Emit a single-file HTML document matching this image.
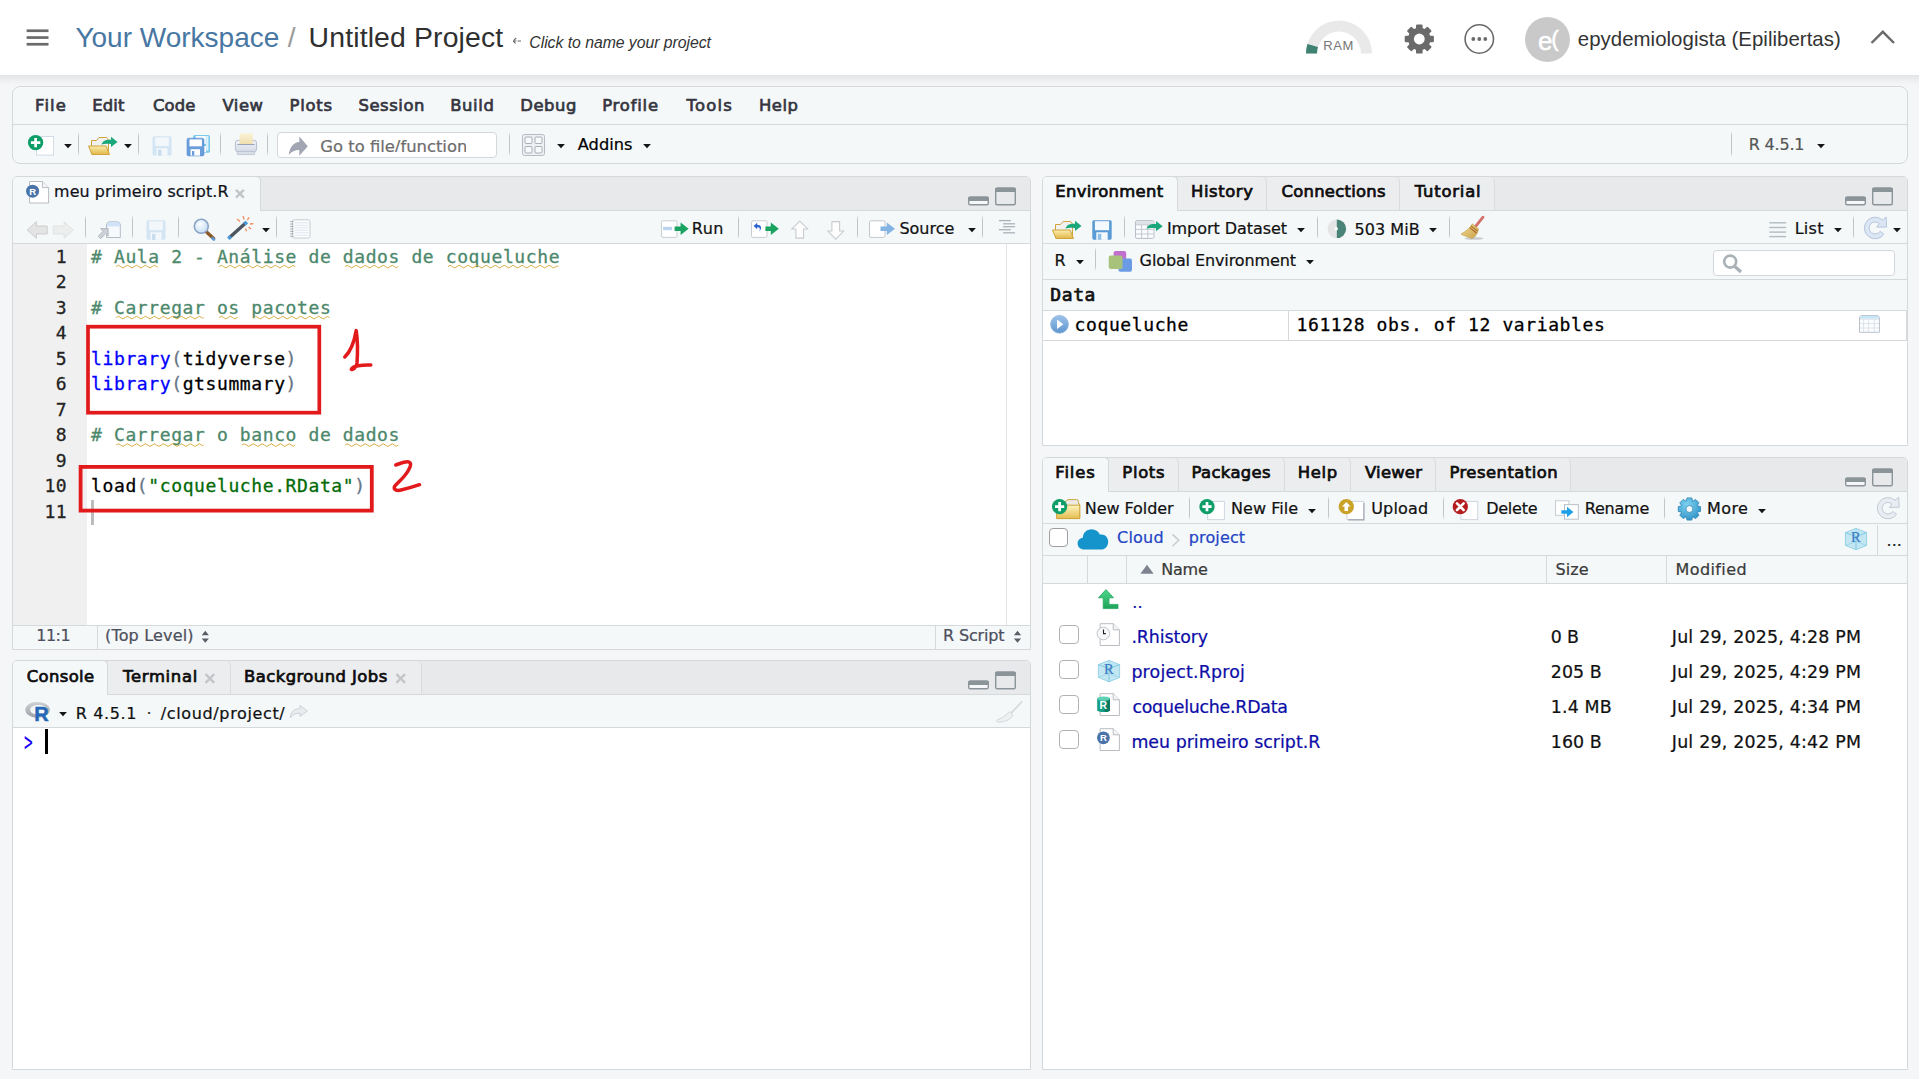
<!DOCTYPE html>
<html lang="pt">
<head>
<meta charset="utf-8">
<title>Untitled Project - Posit Cloud</title>
<style>
*{box-sizing:border-box;margin:0;padding:0}
html,body{width:1919px;height:1079px;overflow:hidden;background:#f4f6f8}
body{position:relative;font-family:'DejaVu Sans','Liberation Sans',sans-serif;color:#1c1c1c;-webkit-text-stroke:0.22px}
.b{position:absolute;display:block}
.T{position:absolute;white-space:pre;line-height:0;height:60px}
.T>i{display:inline-block;width:0;height:60px;vertical-align:baseline}
.sp{width:1px;background:linear-gradient(rgba(190,196,200,0),rgba(190,196,200,1) 18%,rgba(190,196,200,1) 82%,rgba(190,196,200,0))}
.m{font-family:'DejaVu Sans Mono','Liberation Mono',monospace}
</style>
</head>
<body>
<!-- cloud header -->
<div class="b" style="left:0px;top:0px;width:1919px;height:75px;background:#fff;"></div>
<div class="b" style="left:0;top:75px;width:1919px;height:11px;background:linear-gradient(#e2e4e6,#eff1f3 60%,#f4f6f8)"></div>
<svg class="b" style="left:26px;top:29px;" width="24" height="18" viewBox="26 29 24 18"><g fill="#6b6b6b"><rect x="26.6" y="29.4" width="21.9" height="2.7"/><rect x="26.6" y="36.2" width="21.9" height="2.7"/><rect x="26.6" y="42.9" width="21.9" height="2.7"/></g></svg>
<div class="T " style="left:75.40px;top:-12.6px;font-size:28px;font-family:'Liberation Sans','DejaVu Sans',sans-serif;-webkit-text-stroke:0;color:#4777a2;letter-spacing:0.006px;"><i></i>Your Workspace</div>
<div class="T " style="left:287.80px;top:-12.6px;font-size:28px;font-family:'Liberation Sans','DejaVu Sans',sans-serif;-webkit-text-stroke:0;color:#9a9a9a;letter-spacing:1.200px;"><i></i>/</div>
<div class="T " style="left:308.60px;top:-12.6px;font-size:28.4px;font-family:'Liberation Sans','DejaVu Sans',sans-serif;-webkit-text-stroke:0;color:#2f2f2f;letter-spacing:0.139px;"><i></i>Untitled Project</div>
<svg class="b" style="left:512px;top:36px;" width="12" height="10" viewBox="512 36 12 10"><path d="M513 41 H522 M516.2 38 L513 41 L516.2 44" fill="none" stroke="#666" stroke-width="1.1" stroke-dasharray="3.4 1.2"/></svg>
<div class="T " style="left:529.30px;top:-12.2px;font-size:15.8px;font-family:'Liberation Sans','DejaVu Sans',sans-serif;-webkit-text-stroke:0;color:#333;font-style:italic;letter-spacing:-0.037px;"><i></i>Click to name your project</div>
<svg class="b" style="left:1304px;top:18px;" width="70" height="38" viewBox="1304 18 70 38"><path d="M1306 53.5 A33 33 0 0 1 1372 53.5 L1361 53.5 A22 22 0 0 0 1317 53.5 Z" fill="#e9e9e9"/><path d="M1306 53.5 A33 33 0 0 1 1307.4 44 L1318 47 A22 22 0 0 0 1317 53.5 Z" fill="#3f8172"/></svg>
<div class="T " style="left:1323.30px;top:-10px;font-size:13px;font-family:'Liberation Sans','DejaVu Sans',sans-serif;-webkit-text-stroke:0;color:#767676;letter-spacing:0.620px;"><i></i>RAM</div>
<svg class="b" style="left:1403px;top:23px;" width="33" height="33" viewBox="1403 23 33 33"><g transform="translate(1419.3 39)"><g fill="#6a6a6a"><rect x="-3.3" y="-14.6" width="6.6" height="29.2" rx="1.2" transform="rotate(0)"/><rect x="-3.3" y="-14.6" width="6.6" height="29.2" rx="1.2" transform="rotate(45)"/><rect x="-3.3" y="-14.6" width="6.6" height="29.2" rx="1.2" transform="rotate(90)"/><rect x="-3.3" y="-14.6" width="6.6" height="29.2" rx="1.2" transform="rotate(135)"/><circle r="11.2"/></g><circle r="5.4" fill="#fff"/></g></svg>
<svg class="b" style="left:1463px;top:23px;" width="33" height="33" viewBox="1463 23 33 33"><g transform="translate(1479.3 39)"><circle r="14.2" fill="none" stroke="#6a6a6a" stroke-width="1.6"/><circle cx="-6" r="1.9" fill="#6a6a6a"/><circle r="1.9" fill="#6a6a6a"/><circle cx="6" r="1.9" fill="#6a6a6a"/></g></svg>
<div class="b" style="left:1525px;top:17px;width:45px;height:45px;border-radius:50%;background:#c9c9c9"></div>
<div class="T " style="left:1537.90px;top:-10px;font-size:26px;font-family:'Liberation Sans','DejaVu Sans',sans-serif;color:#fff;-webkit-text-stroke:0.5px;letter-spacing:0.100px;"><i></i>e</div>
<div class="T " style="left:1551.20px;top:-14.4px;font-size:22.5px;font-family:'Liberation Sans','DejaVu Sans',sans-serif;color:#fff;-webkit-text-stroke:0.5px;letter-spacing:0.800px;"><i></i>(</div>
<div class="T " style="left:1577.80px;top:-13.7px;font-size:20.4px;font-family:'Liberation Sans','DejaVu Sans',sans-serif;-webkit-text-stroke:0;color:#333;letter-spacing:0.042px;"><i></i>epydemiologista (Epilibertas)</div>
<svg class="b" style="left:1868px;top:28px;" width="30" height="18" viewBox="1868 28 30 18"><path d="M1871.5 43 L1882.8 31.8 L1894 43" fill="none" stroke="#6a6a6a" stroke-width="2.4"/></svg>
<!-- rstudio top toolbar -->
<div class="b" style="left:12px;top:86px;width:1896px;height:78px;border:1px solid #d5d9dc;border-radius:8px;background:#f4f8f9"></div>
<div class="b" style="left:13px;top:124px;width:1894px;height:1px;background:#d5d9dc;"></div>
<div class="T " style="left:35.00px;top:50.6px;font-size:16.4px;color:#35353f;-webkit-text-stroke:0.7px;letter-spacing:1.153px;"><i></i>File</div>
<div class="T " style="left:92.30px;top:50.6px;font-size:16.4px;color:#35353f;-webkit-text-stroke:0.7px;letter-spacing:0.129px;"><i></i>Edit</div>
<div class="T " style="left:153.00px;top:50.6px;font-size:16.4px;color:#35353f;-webkit-text-stroke:0.7px;letter-spacing:0.141px;"><i></i>Code</div>
<div class="T " style="left:222.40px;top:50.6px;font-size:16.4px;color:#35353f;-webkit-text-stroke:0.7px;letter-spacing:0.570px;"><i></i>View</div>
<div class="T " style="left:289.50px;top:50.6px;font-size:16.4px;color:#35353f;-webkit-text-stroke:0.7px;letter-spacing:0.752px;"><i></i>Plots</div>
<div class="T " style="left:358.50px;top:50.6px;font-size:16.4px;color:#35353f;-webkit-text-stroke:0.7px;letter-spacing:0.558px;"><i></i>Session</div>
<div class="T " style="left:450.20px;top:50.6px;font-size:16.4px;color:#35353f;-webkit-text-stroke:0.7px;letter-spacing:0.640px;"><i></i>Build</div>
<div class="T " style="left:520.20px;top:50.6px;font-size:16.4px;color:#35353f;-webkit-text-stroke:0.7px;letter-spacing:0.576px;"><i></i>Debug</div>
<div class="T " style="left:602.20px;top:50.6px;font-size:16.4px;color:#35353f;-webkit-text-stroke:0.7px;letter-spacing:0.820px;"><i></i>Profile</div>
<div class="T " style="left:686.50px;top:50.6px;font-size:16.4px;color:#35353f;-webkit-text-stroke:0.7px;letter-spacing:1.216px;"><i></i>Tools</div>
<div class="T " style="left:759.00px;top:50.6px;font-size:16.4px;color:#35353f;-webkit-text-stroke:0.7px;letter-spacing:0.512px;"><i></i>Help</div>
<svg class="b" style="left:27px;top:133px;" width="30" height="26" viewBox="27 133 30 26"><rect x="36.5" y="136.5" width="17" height="18.6" fill="#fff" stroke="#d3dbe7" stroke-width="1"/><circle cx="35.6" cy="142.6" r="7.7" fill="#0f9d68"/><path d="M35.6 137.9 V147.29999999999998 M30.900000000000002 142.6 H40.300000000000004" stroke="#fff" stroke-width="2.7"/></svg>
<svg class="b" style="left:63px;top:143px;" width="10" height="6" viewBox="63 143 10 6"><path d="M64.1 143.9 H71.9 L68 148.3 Z" fill="#151515"/></svg>
<div class="b sp" style="left:78px;top:132px;height:24px"></div>
<svg class="b" style="left:86px;top:133px;" width="34" height="24" viewBox="86 133 34 24"><defs><linearGradient id="fg88" x1="0" y1="0" x2="0" y2="1"><stop offset="0" stop-color="#fbeeb0"/><stop offset="1" stop-color="#e2b747"/></linearGradient></defs>
<path d="M91.5 154 V140.5 H96.5 L99 137.5 H106.5 L108.5 140 V154 Z" fill="#f1f1f1" stroke="#cfa43a" stroke-width="1"/>
<path d="M88.5 146 H106 L109.5 154.5 H92 Z" fill="url(#fg88)" stroke="#cfa43a" stroke-width="1" stroke-linejoin="round"/>
<path d="M101.5 144.5 C103 140 107 139.5 111 139.8 V136.8 L117.5 142 L111 147 V144 C107 143.6 104 143.6 101.5 144.5 Z" fill="#1aa779"/></svg>
<svg class="b" style="left:123px;top:143px;" width="10" height="6" viewBox="123 143 10 6"><path d="M124.1 143.9 H131.9 L128 148.3 Z" fill="#151515"/></svg>
<div class="b sp" style="left:138px;top:132px;height:24px"></div>
<svg class="b" style="left:150px;top:133px;" width="24" height="24" viewBox="150 133 24 24"><rect x="152.5" y="136.3" width="19" height="19.2" rx="1.6" fill="#d3e4f3"/><rect x="155.1" y="137.3" width="13.8" height="8.8" fill="#f2f7fb"/><rect x="156.5" y="148.2" width="11" height="7.5" fill="#f2f7fb"/><rect x="158.1" y="149.7" width="3.3" height="6.0" fill="#c8dcee"/></svg>
<svg class="b" style="left:185px;top:132px;" width="28" height="26" viewBox="185 132 28 26"><rect x="193.1" y="135" width="16.9" height="17.8" rx="1.6" fill="#7cc9ec"/><rect x="195.6" y="136" width="10.2" height="8" fill="#fff"/><rect x="206.2" y="136" width="2.2" height="14.6" fill="#dff3fb"/><rect x="203" y="146" width="3" height="6" fill="#fff"/><rect x="187" y="138.2" width="17" height="17.7" rx="1.6" fill="#6a9edb" stroke="#5b8fd0" stroke-width=".6"/><rect x="189.5" y="139.4" width="12.4" height="6.9" fill="#fff"/><rect x="190.6" y="149.2" width="9.4" height="6.4" fill="#fff"/><rect x="192" y="151" width="2.3" height="4.6" fill="#6a9edb"/></svg>
<div class="b sp" style="left:220px;top:132px;height:24px"></div>
<svg class="b" style="left:232px;top:131px;" width="28" height="26" viewBox="232 131 28 26"><defs><linearGradient id="pg1" x1="0" y1="0" x2="0" y2="1"><stop offset="0" stop-color="#fbf3d8"/><stop offset="1" stop-color="#f0dfae"/></linearGradient>
<linearGradient id="pg2" x1="0" y1="0" x2="0" y2="1"><stop offset="0" stop-color="#f1f3f7"/><stop offset="1" stop-color="#d5dae6"/></linearGradient></defs>
<rect x="235.4" y="140.3" width="21.2" height="11.4" rx="2.6" fill="url(#pg2)" stroke="#b7bfd0" stroke-width="1"/>
<rect x="237.3" y="151.4" width="17.4" height="3.2" rx=".8" fill="#d9dde7" stroke="#b7bfd0" stroke-width=".8"/>
<rect x="239.5" y="133.3" width="13.3" height="10.6" rx=".8" fill="url(#pg1)"/>
<rect x="237.4" y="144" width="17.2" height="1" fill="#9aa4b8"/></svg>
<div class="b sp" style="left:266.5px;top:132px;height:24px"></div>
<div class="b" style="left:277px;top:132px;width:220px;height:26px;border:1px solid #d3d8dc;border-radius:4px;background:#fff"></div>
<svg class="b" style="left:286px;top:134px;" width="24" height="24" viewBox="286 134 24 24"><path d="M288.8 155 C289.4 147 293.8 142.4 299.3 142 V136.4 L307.8 146.3 L299.3 155.8 V150 C295 150 291.4 151.6 288.8 155 Z" fill="#a2a6b2"/></svg>
<div class="T " style="left:320.3px;top:92px;font-size:16.4px;color:#6d6d6d;width:146px;overflow:hidden;"><i></i>Go to file/function</div>
<div class="b sp" style="left:509px;top:132px;height:24px"></div>
<svg class="b" style="left:521px;top:133px;" width="26" height="24" viewBox="521 133 26 24"><rect x="522.5" y="134.5" width="22" height="21" rx="2" fill="#eef1f4" stroke="#b7bcc4" stroke-width="1"/><g fill="#f7f9fb" stroke="#a9aeb7" stroke-width="1"><rect x="525" y="137" width="7" height="6.5" rx="1"/><rect x="535" y="137" width="7" height="6.5" rx="1"/><rect x="525" y="146.5" width="7" height="6.5" rx="1"/><rect x="535" y="146.5" width="7" height="6.5" rx="1"/></g></svg>
<svg class="b" style="left:555.5px;top:143px;" width="10" height="6" viewBox="555.5 143 10 6"><path d="M556.6 143.9 H564.4 L560.5 148.3 Z" fill="#151515"/></svg>
<div class="T " style="left:577.80px;top:89.5px;font-size:16.2px;color:#000;letter-spacing:0.021px;"><i></i>Addins</div>
<svg class="b" style="left:642px;top:143px;" width="10" height="6" viewBox="642 143 10 6"><path d="M643.1 143.9 H650.9 L647 148.3 Z" fill="#151515"/></svg>
<div class="b sp" style="left:1731px;top:131px;height:26px"></div>
<div class="T " style="left:1748.70px;top:89.8px;font-size:16px;color:#565656;letter-spacing:-0.189px;"><i></i>R 4.5.1</div>
<svg class="b" style="left:1816px;top:143px;" width="10" height="6" viewBox="1816 143 10 6"><path d="M1817.1 143.9 H1824.9 L1821 148.3 Z" fill="#151515"/></svg>
<!-- source pane -->
<div class="b" style="left:12px;top:176px;width:1019px;height:474px;border:1px solid #d5d9dc;border-radius:5px 5px 0 0;background:#fff"></div>
<div class="b" style="left:13px;top:177px;width:1017px;height:33px;border-radius:4px 4px 0 0;background:#e8e9eb"></div>
<div class="b" style="left:13px;top:210px;width:1017px;height:1px;background:#d5d9dc;"></div>
<div class="b" style="left:13px;top:177px;width:247px;height:34px;background:#f4f8f9;border-radius:4px 4px 0 0"></div>
<div class="b" style="left:256px;top:176px;width:5px;height:35px;border-right:1px solid #d5d9dc;border-top:1px solid #d5d9dc;border-radius:0 5px 0 0"></div>
<div class="T " style="left:54.10px;top:136.8px;font-size:15.9px;color:#101018;letter-spacing:0.096px;"><i></i>meu primeiro script.R</div>
<svg class="b" style="left:233px;top:187px;" width="14" height="14" viewBox="233 187 14 14"><path d="M236.0 189.79999999999998 L243.8 197.6 M243.8 189.79999999999998 L236.0 197.6" stroke="#c2c4c7" stroke-width="2.4"/></svg>
<svg class="b" style="left:25px;top:180.1px;" width="26" height="25" viewBox="25 180.1 26 25"><path d="M29.5 181.6 H42.4 L48.6 187.7 V203.1 H29.5 Z" fill="#fff" stroke="#b9bdc2" stroke-width="1"/><path d="M42.4 181.6 V187.7 H48.6" fill="#f3f4f5" stroke="#b9bdc2" stroke-width="1"/><circle cx="32.6" cy="191.29999999999998" r="6.5" fill="#4a73aa"/></svg>
<div class="T " style="left:29.3px;top:134.8px;font-size:9.5px;font-family:'Liberation Sans','DejaVu Sans',sans-serif;-webkit-text-stroke:0;font-weight:bold;color:#fff;"><i></i>R</div>
<svg class="b" style="left:967px;top:186px;" width="51" height="21" viewBox="967 186 51 21"><rect x="968.7" y="197.2" width="19.6" height="7.6" rx="1.5" fill="#f6f7f8" stroke="#8b9499" stroke-width="1.4"/><path d="M968 201 V198.4 Q968 196.5 970 196.5 H987 Q989 196.5 989 198.4 V201 Z" fill="#8b9499"/><rect x="995.7" y="188.2" width="19.6" height="16.6" rx="1.5" fill="none" stroke="#8b9499" stroke-width="1.4"/><path d="M995 192 V189.4 Q995 187.5 997 187.5 H1014 Q1016 187.5 1016 189.4 V192 Z" fill="#8b9499"/></svg>
<div class="b" style="left:13px;top:211px;width:1017px;height:32px;background:#f4f8f9;"></div>
<div class="b" style="left:13px;top:243px;width:1017px;height:1px;background:#d5d9dc;"></div>
<svg class="b" style="left:25px;top:219px;" width="52" height="22" viewBox="25 219 52 22"><path d="M27.2 230.0 L36.36 221.7 V226.04 H47.2 V233.96 H36.36 V238.3 Z" fill="#e4e4e4" stroke="#cdcdcd" stroke-width="1" stroke-linejoin="round"/><path d="M73.3 230.0 L64.14 221.7 V226.04 H53.3 V233.96 H64.14 V238.3 Z" fill="#eceeee" stroke="#e0e2e2" stroke-width="1" stroke-linejoin="round"/></svg>
<div class="b sp" style="left:85px;top:215px;height:24px"></div>
<svg class="b" style="left:96px;top:219px;" width="27" height="21" viewBox="96 219 27 21"><path d="M106.5 237.5 V225 Q106.5 221.8 109.7 221.8 H117 Q120.3 221.8 120.3 225 V237.5 Z" fill="#f7fafd" stroke="#b4bcc8" stroke-width="1"/><path d="M107 226.5 V225 Q107 222.3 109.7 222.3 H117 Q119.8 222.3 119.8 225 V226.5 Z" fill="#cfe2f7"/><path d="M98.3 236.3 L103.2 231.2 L100.6 228.6 H108.2 V236.2 L105.6 233.6 L100.7 238.7 Z" fill="#cdd1d8" stroke="#a9afb9" stroke-width=".8" stroke-linejoin="round"/></svg>
<div class="b sp" style="left:132px;top:215px;height:24px"></div>
<svg class="b" style="left:144px;top:218px;" width="24" height="24" viewBox="144 218 24 24"><rect x="146.5" y="220.3" width="19" height="19.4" rx="1.6" fill="#d3e4f3"/><rect x="149.1" y="221.3" width="13.8" height="8.9" fill="#f2f7fb"/><rect x="150.5" y="232.3" width="11" height="7.6" fill="#f2f7fb"/><rect x="152.1" y="233.9" width="3.3" height="6.0" fill="#c8dcee"/></svg>
<div class="b sp" style="left:178px;top:215px;height:24px"></div>
<svg class="b" style="left:191px;top:216px;" width="26" height="26" viewBox="191 216 26 26"><defs><radialGradient id="mg1" cx=".4" cy=".35" r=".7"><stop offset="0" stop-color="#fafdff"/><stop offset="1" stop-color="#c4dcf5"/></radialGradient></defs><path d="M206 231.5 L213.6 238.6" stroke="#8a5a2a" stroke-width="3.4" stroke-linecap="round"/><path d="M212.5 238.2 L214 239.4" stroke="#5a9bd8" stroke-width="2.6" stroke-linecap="round"/><circle cx="201.3" cy="226.3" r="7" fill="url(#mg1)" stroke="#8aa4c4" stroke-width="1.6"/></svg>
<svg class="b" style="left:226px;top:214px;" width="29" height="27" viewBox="226 214 29 27"><path d="M229 238 L246.2 222.6" stroke="#4d5560" stroke-width="3.4" stroke-linecap="butt"/><path d="M228.3 238.7 L230.8 236.4" stroke="#4a98d9" stroke-width="3.6"/><path d="M244.4 224.2 L246.9 222" stroke="#4a98d9" stroke-width="3.6"/><path d="M243 216 L244.2 219.6" stroke="#f38a5b" stroke-width="1.3"/><path d="M237 219 L240 221.4" stroke="#f38a5b" stroke-width="1.3"/><path d="M249 217.2 L247.4 220.2" stroke="#f38a5b" stroke-width="1.3"/><path d="M250 224 L253.4 223.6" stroke="#f38a5b" stroke-width="1.3"/><path d="M248.6 227 L251 229" stroke="#f38a5b" stroke-width="1.3"/><path d="M245.5 228.5 L246.6 231.2" stroke="#f38a5b" stroke-width="1.3"/></svg>
<svg class="b" style="left:260.7px;top:226.8px;" width="10" height="6" viewBox="260.7 226.8 10 6"><path d="M261.8 227.70000000000002 H269.59999999999997 L265.7 232.10000000000002 Z" fill="#151515"/></svg>
<div class="b sp" style="left:276px;top:215px;height:24px"></div>
<svg class="b" style="left:289px;top:218px;" width="23" height="22" viewBox="289 218 23 22"><rect x="292.5" y="219.8" width="17.5" height="18.2" rx="1.6" fill="#fdfdfd" stroke="#c9ccd1" stroke-width="1"/><path d="M294.5 222.8 H308.5" stroke="#d8dfef" stroke-width=".8"/><path d="M294.5 225.3 H308.5" stroke="#d8dfef" stroke-width=".8"/><path d="M294.5 227.8 H308.5" stroke="#d8dfef" stroke-width=".8"/><path d="M294.5 230.3 H308.5" stroke="#d8dfef" stroke-width=".8"/><path d="M294.5 232.8 H308.5" stroke="#d8dfef" stroke-width=".8"/><path d="M294.5 235.3 H308.5" stroke="#d8dfef" stroke-width=".8"/><path d="M290.2 221.6 H293.6" stroke="#a8abb0" stroke-width="1"/><path d="M290.2 224.04999999999998 H293.6" stroke="#a8abb0" stroke-width="1"/><path d="M290.2 226.5 H293.6" stroke="#a8abb0" stroke-width="1"/><path d="M290.2 228.95 H293.6" stroke="#a8abb0" stroke-width="1"/><path d="M290.2 231.4 H293.6" stroke="#a8abb0" stroke-width="1"/><path d="M290.2 233.85 H293.6" stroke="#a8abb0" stroke-width="1"/><path d="M290.2 236.29999999999998 H293.6" stroke="#a8abb0" stroke-width="1"/></svg>
<svg class="b" style="left:660px;top:218px;" width="30" height="22" viewBox="660 218 30 22"><rect x="661.5" y="220.8" width="15.5" height="16.6" rx="1.5" fill="#fff" stroke="#c8cdd3" stroke-width="1"/><rect x="663" y="226.8" width="9" height="3.4" fill="#bcd3f2"/><path d="M674.6 226.5 H680.6 V222.4 L688.6 228.7 L680.6 235 V230.9 H674.6 Z" fill="#1aa260"/></svg>
<div class="T " style="left:691.80px;top:174.2px;font-size:16px;color:#111;letter-spacing:0.430px;"><i></i>Run</div>
<div class="b sp" style="left:738px;top:215px;height:24px"></div>
<svg class="b" style="left:750px;top:218px;" width="30" height="22" viewBox="750 218 30 22"><rect x="751.5" y="220.8" width="15.5" height="16.6" rx="1.5" fill="#fff" stroke="#c8cdd3" stroke-width="1"/><path d="M757.2 222.8 L753.6 226 L757.2 229.2 V227.2 C759.8 227.2 760.6 228.6 759.2 231.4 C762.6 228.4 761.2 224.8 757.2 224.8 Z" fill="#2d62d3"/><path d="M765.4 226.5 H770.8 V222.4 L778.8 228.7 L770.8 235 V230.9 H765.4 Z" fill="#1aa260"/></svg>
<svg class="b" style="left:790px;top:219px;" width="20" height="22" viewBox="790 219 20 22"><path d="M799.75 221.1 L807.9 229.054 H803.6 V238.1 H795.9 V229.054 H791.6 Z" fill="#fdfdfd" stroke="#c9cccf" stroke-width="1.1" stroke-linejoin="round"/></svg>
<svg class="b" style="left:826px;top:219px;" width="20" height="22" viewBox="826 219 20 22"><path d="M835.75 239.20000000000002 L843.9 230.964 H839.6 V221.6 H831.9 V230.964 H827.6 Z" fill="#fdfdfd" stroke="#c9cccf" stroke-width="1.1" stroke-linejoin="round"/></svg>
<div class="b sp" style="left:857px;top:215px;height:24px"></div>
<svg class="b" style="left:868px;top:218px;" width="29" height="22" viewBox="868 218 29 22"><rect x="869.5" y="220.8" width="15.5" height="16.6" rx="1.5" fill="#fff" stroke="#c2c7ce" stroke-width="1"/><path d="M880.5 226.6 H886.8 V222.6 L895 228.8 L886.8 235 V231 H880.5 Z" fill="#84b4e4"/></svg>
<div class="T " style="left:899.50px;top:174.2px;font-size:16px;color:#111;letter-spacing:-0.042px;"><i></i>Source</div>
<svg class="b" style="left:967.4px;top:226.8px;" width="10" height="6" viewBox="967.4 226.8 10 6"><path d="M968.5 227.70000000000002 H976.3 L972.4 232.10000000000002 Z" fill="#151515"/></svg>
<div class="b sp" style="left:982px;top:215px;height:24px"></div>
<svg class="b" style="left:998px;top:219px;" width="18" height="16" viewBox="998 219 18 16"><path d="M998.9 220.6 H1010.9" stroke="#a9b2b8" stroke-width="1.3"/><path d="M1003.1 223.8 H1015" stroke="#a9b2b8" stroke-width="1.3"/><path d="M1003.1 226.7 H1015" stroke="#a9b2b8" stroke-width="1.3"/><path d="M998.9 229.7 H1010.9" stroke="#a9b2b8" stroke-width="1.3"/><path d="M1003.1 232.8 H1015" stroke="#a9b2b8" stroke-width="1.3"/></svg>
<div class="b" style="left:13px;top:244px;width:74px;height:381px;background:#f0f0f0;"></div>
<div class="b" style="left:1006px;top:244px;width:1px;height:381px;background:#e4e4e4;"></div>
<div class="T " style="left:55.86px;top:202.75px;font-size:18px;font-family:'DejaVu Sans Mono','Liberation Mono',monospace;-webkit-text-stroke:0.3px;color:#232323;letter-spacing:0.603px;"><i></i>1</div>
<div class="T " style="left:91.1px;top:202.75px;font-size:18px;font-family:'DejaVu Sans Mono','Liberation Mono',monospace;-webkit-text-stroke:0.3px;letter-spacing:0.603px;"><i></i><span style="color:#4c886b"># Aula 2 - Análise de dados de coqueluche</span></div>
<div class="T " style="left:55.86px;top:228.25px;font-size:18px;font-family:'DejaVu Sans Mono','Liberation Mono',monospace;-webkit-text-stroke:0.3px;color:#232323;letter-spacing:0.603px;"><i></i>2</div>
<div class="T " style="left:55.86px;top:253.75px;font-size:18px;font-family:'DejaVu Sans Mono','Liberation Mono',monospace;-webkit-text-stroke:0.3px;color:#232323;letter-spacing:0.603px;"><i></i>3</div>
<div class="T " style="left:91.1px;top:253.75px;font-size:18px;font-family:'DejaVu Sans Mono','Liberation Mono',monospace;-webkit-text-stroke:0.3px;letter-spacing:0.603px;"><i></i><span style="color:#4c886b"># Carregar os pacotes</span></div>
<div class="T " style="left:55.86px;top:279.25px;font-size:18px;font-family:'DejaVu Sans Mono','Liberation Mono',monospace;-webkit-text-stroke:0.3px;color:#232323;letter-spacing:0.603px;"><i></i>4</div>
<div class="T " style="left:55.86px;top:304.75px;font-size:18px;font-family:'DejaVu Sans Mono','Liberation Mono',monospace;-webkit-text-stroke:0.3px;color:#232323;letter-spacing:0.603px;"><i></i>5</div>
<div class="T " style="left:91.1px;top:304.75px;font-size:18px;font-family:'DejaVu Sans Mono','Liberation Mono',monospace;-webkit-text-stroke:0.3px;letter-spacing:0.603px;"><i></i><span style="color:#0000ff">library</span><span style="color:#687687">(</span><span style="color:#000">tidyverse</span><span style="color:#687687">)</span></div>
<div class="T " style="left:55.86px;top:330.25px;font-size:18px;font-family:'DejaVu Sans Mono','Liberation Mono',monospace;-webkit-text-stroke:0.3px;color:#232323;letter-spacing:0.603px;"><i></i>6</div>
<div class="T " style="left:91.1px;top:330.25px;font-size:18px;font-family:'DejaVu Sans Mono','Liberation Mono',monospace;-webkit-text-stroke:0.3px;letter-spacing:0.603px;"><i></i><span style="color:#0000ff">library</span><span style="color:#687687">(</span><span style="color:#000">gtsummary</span><span style="color:#687687">)</span></div>
<div class="T " style="left:55.86px;top:355.75px;font-size:18px;font-family:'DejaVu Sans Mono','Liberation Mono',monospace;-webkit-text-stroke:0.3px;color:#232323;letter-spacing:0.603px;"><i></i>7</div>
<div class="T " style="left:55.86px;top:381.25px;font-size:18px;font-family:'DejaVu Sans Mono','Liberation Mono',monospace;-webkit-text-stroke:0.3px;color:#232323;letter-spacing:0.603px;"><i></i>8</div>
<div class="T " style="left:91.1px;top:381.25px;font-size:18px;font-family:'DejaVu Sans Mono','Liberation Mono',monospace;-webkit-text-stroke:0.3px;letter-spacing:0.603px;"><i></i><span style="color:#4c886b"># Carregar o banco de dados</span></div>
<div class="T " style="left:55.86px;top:406.75px;font-size:18px;font-family:'DejaVu Sans Mono','Liberation Mono',monospace;-webkit-text-stroke:0.3px;color:#232323;letter-spacing:0.603px;"><i></i>9</div>
<div class="T " style="left:44.42px;top:432.25px;font-size:18px;font-family:'DejaVu Sans Mono','Liberation Mono',monospace;-webkit-text-stroke:0.3px;color:#232323;letter-spacing:0.603px;"><i></i>10</div>
<div class="T " style="left:91.1px;top:432.25px;font-size:18px;font-family:'DejaVu Sans Mono','Liberation Mono',monospace;-webkit-text-stroke:0.3px;letter-spacing:0.603px;"><i></i><span style="color:#000">load</span><span style="color:#687687">(</span><span style="color:#036a07">&quot;coqueluche.RData&quot;</span><span style="color:#687687">)</span></div>
<div class="T " style="left:44.42px;top:457.75px;font-size:18px;font-family:'DejaVu Sans Mono','Liberation Mono',monospace;-webkit-text-stroke:0.3px;color:#232323;letter-spacing:0.603px;"><i></i>11</div>
<svg class="b" style="left:88px;top:244px;" width="500" height="230" viewBox="88 244 500 230"><path d="M116.2 266.6 Q118.4 263.9 120.7 266.6 Q122.9 269.3 125.2 266.6 Q127.4 263.9 129.7 266.6 Q131.9 269.3 134.2 266.6 Q136.4 263.9 138.7 266.6 Q140.9 269.3 143.2 266.6 Q145.4 263.9 147.7 266.6 Q149.9 269.3 152.2 266.6 Q154.4 263.9 156.7 266.6 Q157.3 267.4 157.9 266.6" fill="none" stroke="#d3a42c" stroke-width="0.9"/><path d="M219.1 266.6 Q221.4 263.9 223.6 266.6 Q225.9 269.3 228.1 266.6 Q230.4 263.9 232.6 266.6 Q234.9 269.3 237.1 266.6 Q239.4 263.9 241.6 266.6 Q243.9 269.3 246.1 266.6 Q248.4 263.9 250.6 266.6 Q252.9 269.3 255.1 266.6 Q257.4 263.9 259.6 266.6 Q261.9 269.3 264.1 266.6 Q266.4 263.9 268.6 266.6 Q270.9 269.3 273.1 266.6 Q275.4 263.9 277.6 266.6 Q279.9 269.3 282.1 266.6 Q284.4 263.9 286.6 266.6 Q288.9 269.3 291.1 266.6 Q293.2 264.2 295.2 266.6" fill="none" stroke="#d3a42c" stroke-width="0.9"/><path d="M345.0 266.6 Q347.2 263.9 349.5 266.6 Q351.7 269.3 354.0 266.6 Q356.2 263.9 358.5 266.6 Q360.7 269.3 363.0 266.6 Q365.2 263.9 367.5 266.6 Q369.7 269.3 372.0 266.6 Q374.2 263.9 376.5 266.6 Q378.7 269.3 381.0 266.6 Q383.2 263.9 385.5 266.6 Q387.7 269.3 390.0 266.6 Q392.2 263.9 394.5 266.6 Q396.3 268.9 398.2 266.6" fill="none" stroke="#d3a42c" stroke-width="0.9"/><path d="M447.9 266.6 Q450.2 263.9 452.4 266.6 Q454.7 269.3 456.9 266.6 Q459.2 263.9 461.4 266.6 Q463.7 269.3 465.9 266.6 Q468.2 263.9 470.4 266.6 Q472.7 269.3 474.9 266.6 Q477.2 263.9 479.4 266.6 Q481.7 269.3 483.9 266.6 Q486.2 263.9 488.4 266.6 Q490.7 269.3 492.9 266.6 Q495.2 263.9 497.4 266.6 Q499.7 269.3 501.9 266.6 Q504.2 263.9 506.4 266.6 Q508.7 269.3 510.9 266.6 Q513.2 263.9 515.4 266.6 Q517.7 269.3 519.9 266.6 Q522.2 263.9 524.4 266.6 Q526.7 269.3 528.9 266.6 Q531.2 263.9 533.4 266.6 Q535.7 269.3 537.9 266.6 Q540.2 263.9 542.4 266.6 Q544.7 269.3 546.9 266.6 Q549.2 263.9 551.4 266.6 Q553.7 269.3 555.9 266.6 Q557.1 265.2 558.3 266.6" fill="none" stroke="#d3a42c" stroke-width="0.9"/><path d="M116.2 317.6 Q118.4 314.9 120.7 317.6 Q122.9 320.3 125.2 317.6 Q127.4 314.9 129.7 317.6 Q131.9 320.3 134.2 317.6 Q136.4 314.9 138.7 317.6 Q140.9 320.3 143.2 317.6 Q145.4 314.9 147.7 317.6 Q149.9 320.3 152.2 317.6 Q154.4 314.9 156.7 317.6 Q158.9 320.3 161.2 317.6 Q163.4 314.9 165.7 317.6 Q167.9 320.3 170.2 317.6 Q172.4 314.9 174.7 317.6 Q176.9 320.3 179.2 317.6 Q181.4 314.9 183.7 317.6 Q185.9 320.3 188.2 317.6 Q190.4 314.9 192.7 317.6 Q194.9 320.3 197.2 317.6 Q199.4 314.9 201.7 317.6 Q202.7 318.9 203.7 317.6" fill="none" stroke="#d3a42c" stroke-width="0.9"/><path d="M219.1 317.6 Q221.4 314.9 223.6 317.6 Q225.9 320.3 228.1 317.6 Q230.4 314.9 232.6 317.6 Q234.9 320.3 237.1 317.6 Q237.6 317.1 238.0 317.6" fill="none" stroke="#d3a42c" stroke-width="0.9"/><path d="M253.5 317.6 Q255.7 314.9 258.0 317.6 Q260.2 320.3 262.5 317.6 Q264.7 314.9 267.0 317.6 Q269.2 320.3 271.5 317.6 Q273.7 314.9 276.0 317.6 Q278.2 320.3 280.5 317.6 Q282.7 314.9 285.0 317.6 Q287.2 320.3 289.5 317.6 Q291.7 314.9 294.0 317.6 Q296.2 320.3 298.5 317.6 Q300.7 314.9 303.0 317.6 Q305.2 320.3 307.5 317.6 Q309.7 314.9 312.0 317.6 Q314.2 320.3 316.5 317.6 Q318.7 314.9 321.0 317.6 Q323.2 320.3 325.5 317.6 Q327.5 315.2 329.5 317.6" fill="none" stroke="#d3a42c" stroke-width="0.9"/><path d="M116.2 445.1 Q118.4 442.4 120.7 445.1 Q122.9 447.8 125.2 445.1 Q127.4 442.4 129.7 445.1 Q131.9 447.8 134.2 445.1 Q136.4 442.4 138.7 445.1 Q140.9 447.8 143.2 445.1 Q145.4 442.4 147.7 445.1 Q149.9 447.8 152.2 445.1 Q154.4 442.4 156.7 445.1 Q158.9 447.8 161.2 445.1 Q163.4 442.4 165.7 445.1 Q167.9 447.8 170.2 445.1 Q172.4 442.4 174.7 445.1 Q176.9 447.8 179.2 445.1 Q181.4 442.4 183.7 445.1 Q185.9 447.8 188.2 445.1 Q190.4 442.4 192.7 445.1 Q194.9 447.8 197.2 445.1 Q199.4 442.4 201.7 445.1 Q202.7 446.4 203.7 445.1" fill="none" stroke="#d3a42c" stroke-width="0.9"/><path d="M242.0 445.1 Q244.3 442.4 246.5 445.1 Q248.8 447.8 251.0 445.1 Q253.3 442.4 255.5 445.1 Q257.8 447.8 260.0 445.1 Q262.3 442.4 264.5 445.1 Q266.8 447.8 269.0 445.1 Q271.3 442.4 273.5 445.1 Q275.8 447.8 278.0 445.1 Q280.3 442.4 282.5 445.1 Q284.8 447.8 287.0 445.1 Q289.3 442.4 291.5 445.1 Q293.4 447.4 295.2 445.1" fill="none" stroke="#d3a42c" stroke-width="0.9"/><path d="M345.0 445.1 Q347.2 442.4 349.5 445.1 Q351.7 447.8 354.0 445.1 Q356.2 442.4 358.5 445.1 Q360.7 447.8 363.0 445.1 Q365.2 442.4 367.5 445.1 Q369.7 447.8 372.0 445.1 Q374.2 442.4 376.5 445.1 Q378.7 447.8 381.0 445.1 Q383.2 442.4 385.5 445.1 Q387.7 447.8 390.0 445.1 Q392.2 442.4 394.5 445.1 Q396.3 447.4 398.2 445.1" fill="none" stroke="#d3a42c" stroke-width="0.9"/></svg>
<div class="b" style="left:91.3px;top:499.5px;width:2.4px;height:25px;background:#bdbdbd;"></div>
<svg class="b" style="left:76px;top:320px;" width="350" height="200" viewBox="76 320 350 200"><rect x="88" y="326.7" width="231.3" height="86" fill="none" stroke="#e21a1c" stroke-width="3.7"/><rect x="80.6" y="466.9" width="291.2" height="43.7" fill="none" stroke="#e21a1c" stroke-width="3.8"/><path d="M344.8 357 C350 352 354.2 342 356.2 330.6 C357.6 340 357.6 355 357 363 C356 368 353 370 351.3 369.3 C352.5 366 362 364.6 370.8 365" fill="none" stroke="#e21a1c" stroke-width="3.5" stroke-linecap="round" stroke-linejoin="round"/><path d="M395.8 465 C400 463.6 405 461.2 408.5 461.9 C412 463 410.6 467 408 471 C404 478 398 482 394.6 486.4 C393 490 397 491 401 490 C408 488.5 414 486.6 419.5 484.7" fill="none" stroke="#e21a1c" stroke-width="3.5" stroke-linecap="round" stroke-linejoin="round"/></svg>
<div class="b" style="left:13px;top:626px;width:1017px;height:23px;background:#f4f8f9;"></div>
<div class="b" style="left:13px;top:625px;width:1017px;height:1px;background:#d5d9dc;"></div>
<div class="T " style="left:36.20px;top:580.8px;font-size:16px;color:#4c4f5c;letter-spacing:-0.483px;"><i></i>11:1</div>
<div class="b" style="left:97px;top:626px;width:1px;height:23px;background:#d5d9dc;"></div>
<div class="T " style="left:105.00px;top:580.8px;font-size:16px;color:#4c4f5c;letter-spacing:0.174px;"><i></i>(Top Level)</div>
<svg class="b" style="left:200px;top:629px;" width="10" height="16" viewBox="200 629 10 16"><path d="M201.70000000000002 635.1999999999999 L205.3 630.8 L208.9 635.1999999999999 Z M201.70000000000002 638.4 L205.3 642.8 L208.9 638.4 Z" fill="#5a5d66"/></svg>
<div class="b" style="left:935px;top:626px;width:1px;height:23px;background:#d5d9dc;"></div>
<div class="T " style="left:943.00px;top:580.8px;font-size:16px;color:#4c4f5c;letter-spacing:-0.148px;"><i></i>R Script</div>
<svg class="b" style="left:1012px;top:629px;" width="10" height="16" viewBox="1012 629 10 16"><path d="M1013.9 635.1999999999999 L1017.5 630.8 L1021.1 635.1999999999999 Z M1013.9 638.4 L1017.5 642.8 L1021.1 638.4 Z" fill="#5a5d66"/></svg>
<!-- console pane -->
<div class="b" style="left:12px;top:660px;width:1019px;height:410px;border:1px solid #d5d9dc;border-radius:5px 5px 0 0;background:#fff"></div>
<div class="b" style="left:13px;top:661px;width:1017px;height:33px;border-radius:4px 4px 0 0;background:#e8e9eb"></div>
<div class="b" style="left:13px;top:694px;width:1017px;height:1px;background:#d5d9dc;"></div>
<div class="b" style="left:13px;top:661px;width:94px;height:34px;background:#f4f8f9;border-radius:4px 4px 0 0"></div>
<div class="b" style="left:103px;top:660px;width:5px;height:35px;border-right:1px solid #d5d9dc;border-top:1px solid #d5d9dc;border-radius:0 5px 0 0"></div>
<div class="T " style="left:26.80px;top:621.7px;font-size:16.4px;color:#0c0c0c;-webkit-text-stroke:0.72px;letter-spacing:0.370px;"><i></i>Console</div>
<div class="b" style="left:108px;top:661px;width:123px;height:33px;background:#ecedef;border-right:1px solid #d9dbde;border-radius:0 5px 0 0"></div>
<div class="T " style="left:123.00px;top:621.7px;font-size:16.4px;color:#0c0c0c;-webkit-text-stroke:0.72px;letter-spacing:0.713px;"><i></i>Terminal</div>
<svg class="b" style="left:203px;top:672px;" width="14" height="14" viewBox="203 672 14 14"><path d="M205.6 674.2 L214.20000000000002 682.8 M214.20000000000002 674.2 L205.6 682.8" stroke="#c3c5c8" stroke-width="2.4"/></svg>
<div class="b" style="left:231px;top:661px;width:191px;height:33px;background:#ecedef;border-right:1px solid #d9dbde;border-radius:0 5px 0 0"></div>
<div class="T " style="left:244.00px;top:621.7px;font-size:16.4px;color:#0c0c0c;-webkit-text-stroke:0.72px;letter-spacing:0.460px;"><i></i>Background Jobs</div>
<svg class="b" style="left:394px;top:672px;" width="14" height="14" viewBox="394 672 14 14"><path d="M396.4 674.2 L405.0 682.8 M405.0 674.2 L396.4 682.8" stroke="#c3c5c8" stroke-width="2.4"/></svg>
<svg class="b" style="left:967px;top:670px;" width="51" height="21" viewBox="967 670 51 21"><rect x="968.7" y="681.2" width="19.6" height="7.6" rx="1.5" fill="#f6f7f8" stroke="#8b9499" stroke-width="1.4"/><path d="M968 685 V682.4 Q968 680.5 970 680.5 H987 Q989 680.5 989 682.4 V685 Z" fill="#8b9499"/><rect x="995.7" y="672.2" width="19.6" height="16.6" rx="1.5" fill="none" stroke="#8b9499" stroke-width="1.4"/><path d="M995 676 V673.4 Q995 671.5 997 671.5 H1014 Q1016 671.5 1016 673.4 V676 Z" fill="#8b9499"/></svg>
<div class="b" style="left:13px;top:695px;width:1017px;height:32px;background:#f4f8f9;"></div>
<div class="b" style="left:13px;top:727px;width:1017px;height:1px;background:#d5d9dc;"></div>
<svg class="b" style="left:24px;top:700px;" width="28" height="23" viewBox="24 700 28 23"><defs><linearGradient id="rl1" x1="0" y1="0" x2="0" y2="1"><stop offset="0" stop-color="#cfd1d4"/><stop offset="1" stop-color="#9fa2a7"/></linearGradient></defs><path fill-rule="evenodd" d="M37.3 702 C44.4 702 50 705.4 50 709.8 C50 714.2 44.4 717.6 37.3 717.6 C30.4 717.6 25.3 714.2 25.3 709.8 C25.3 705.4 30.4 702 37.3 702 Z M38.6 704.9 C33.6 704.9 30.2 707 30.2 709.8 C30.2 712.6 33.6 714.7 38.6 714.7 C43.4 714.7 46.3 712.6 46.3 709.8 C46.3 707 43.4 704.9 38.6 704.9 Z" fill="url(#rl1)"/></svg>
<div class="T " style="left:34.2px;top:661.3px;font-size:20px;font-family:'Liberation Sans','DejaVu Sans',sans-serif;font-weight:bold;color:#2568b8;-webkit-text-stroke:0.5px;"><i></i>R</div>
<svg class="b" style="left:58.3px;top:710.9px;" width="10" height="6" viewBox="58.3 710.9 10 6"><path d="M59.4 711.8 H67.2 L63.3 716.1999999999999 Z" fill="#151515"/></svg>
<div class="T " style="left:75.80px;top:659.2px;font-size:16px;color:#111;letter-spacing:0.628px;"><i></i>R 4.5.1</div>
<div class="T " style="left:146.6px;top:659.2px;font-size:16px;color:#333;"><i></i>·</div>
<div class="T " style="left:160.80px;top:659.2px;font-size:16px;color:#111;letter-spacing:0.633px;"><i></i>/cloud/project/</div>
<svg class="b" style="left:288px;top:703px;" width="22" height="18" viewBox="288 703 22 18"><path d="M290.2 718 C290.8 711.5 294.5 708.8 300 708.6 V705.4 L307.4 711 L300 716.4 V713.2 C296 713 292.8 714.4 290.2 718 Z" fill="#e9ecef" stroke="#cdd2d7" stroke-width="1" stroke-linejoin="round"/></svg>
<svg class="b" style="left:994px;top:699px;" width="32" height="26" viewBox="994 699 32 26"><path d="M1021.6 702 L1011 713.2" stroke="#d6dadd" stroke-width="1.8" stroke-linecap="round"/><path d="M1009.5 711.6 L1013 715 C1011 719 1006 722 998.5 722 C996.5 722 996 721 997.5 720 C1003 717.5 1006.5 715 1009.5 711.6 Z" fill="#eef0f2" stroke="#d3d7da" stroke-width="1" stroke-linejoin="round"/></svg>
<div class="T " style="left:22.9px;top:688.3px;font-size:18px;font-family:'DejaVu Sans Mono','Liberation Mono',monospace;-webkit-text-stroke:0.3px;color:#1a00f5;transform:scale(0.8,1.5);transform-origin:5.4px 54.2px;-webkit-text-stroke:0;"><i></i>&gt;</div>
<div class="b" style="left:44.9px;top:729.3px;width:3px;height:24.4px;background:#000;"></div>
<!-- environment pane -->
<div class="b" style="left:1042px;top:176px;width:866px;height:270px;border:1px solid #d5d9dc;border-radius:5px 5px 0 0;background:#fff"></div>
<div class="b" style="left:1043px;top:177px;width:864px;height:33px;border-radius:4px 4px 0 0;background:#e8e9eb"></div>
<div class="b" style="left:1043px;top:210px;width:864px;height:1px;background:#d5d9dc;"></div>
<div class="b" style="left:1043px;top:177px;width:134px;height:34px;background:#f4f8f9;border-radius:4px 4px 0 0"></div>
<div class="b" style="left:1173px;top:176px;width:5px;height:35px;border-right:1px solid #d5d9dc;border-top:1px solid #d5d9dc;border-radius:0 5px 0 0"></div>
<div class="T " style="left:1055.30px;top:137px;font-size:16.4px;color:#0c0c0c;-webkit-text-stroke:0.72px;letter-spacing:0.317px;"><i></i>Environment</div>
<div class="b" style="left:1178px;top:177px;width:89px;height:33px;background:#ecedef;border-right:1px solid #d9dbde;border-radius:0 5px 0 0"></div>
<div class="T " style="left:1191.00px;top:137px;font-size:16.4px;color:#0c0c0c;-webkit-text-stroke:0.72px;letter-spacing:0.598px;"><i></i>History</div>
<div class="b" style="left:1267px;top:177px;width:133px;height:33px;background:#ecedef;border-right:1px solid #d9dbde;border-radius:0 5px 0 0"></div>
<div class="T " style="left:1281.50px;top:137px;font-size:16.4px;color:#0c0c0c;-webkit-text-stroke:0.72px;letter-spacing:0.276px;"><i></i>Connections</div>
<div class="b" style="left:1400px;top:177px;width:95px;height:33px;background:#ecedef;border-right:1px solid #d9dbde;border-radius:0 5px 0 0"></div>
<div class="T " style="left:1414.70px;top:137px;font-size:16.4px;color:#0c0c0c;-webkit-text-stroke:0.72px;letter-spacing:0.800px;"><i></i>Tutorial</div>
<svg class="b" style="left:1844px;top:186px;" width="51" height="21" viewBox="1844 186 51 21"><rect x="1845.7" y="197.2" width="19.6" height="7.6" rx="1.5" fill="#f6f7f8" stroke="#8b9499" stroke-width="1.4"/><path d="M1845 201 V198.4 Q1845 196.5 1847 196.5 H1864 Q1866 196.5 1866 198.4 V201 Z" fill="#8b9499"/><rect x="1872.7" y="188.2" width="19.6" height="16.6" rx="1.5" fill="none" stroke="#8b9499" stroke-width="1.4"/><path d="M1872 192 V189.4 Q1872 187.5 1874 187.5 H1891 Q1893 187.5 1893 189.4 V192 Z" fill="#8b9499"/></svg>
<div class="b" style="left:1043px;top:211px;width:864px;height:32px;background:#f4f8f9;"></div>
<div class="b" style="left:1043px;top:243px;width:864px;height:1px;background:#d5d9dc;"></div>
<div class="b" style="left:1043px;top:244px;width:864px;height:35px;background:#f4f8f9;"></div>
<div class="b" style="left:1043px;top:279px;width:864px;height:1px;background:#d5d9dc;"></div>
<svg class="b" style="left:1050px;top:217px;" width="34" height="24" viewBox="1050 217 34 24"><defs><linearGradient id="fg1052" x1="0" y1="0" x2="0" y2="1"><stop offset="0" stop-color="#fbeeb0"/><stop offset="1" stop-color="#e2b747"/></linearGradient></defs>
<path d="M1055.5 238 V224.5 H1060.5 L1063 221.5 H1070.5 L1072.5 224 V238 Z" fill="#f1f1f1" stroke="#cfa43a" stroke-width="1"/>
<path d="M1052.5 230 H1070 L1073.5 238.5 H1056 Z" fill="url(#fg1052)" stroke="#cfa43a" stroke-width="1" stroke-linejoin="round"/>
<path d="M1065.5 228.5 C1067 224 1071 223.5 1075 223.8 V220.8 L1081.5 226 L1075 231 V228 C1071 227.6 1068 227.6 1065.5 228.5 Z" fill="#1aa779"/></svg>
<svg class="b" style="left:1090px;top:218px;" width="24" height="24" viewBox="1090 218 24 24"><rect x="1092.3" y="220.2" width="19.4" height="19.5" rx="1.6" fill="#5b9bd5"/><rect x="1094.8999999999999" y="221.2" width="14.2" height="9.0" fill="#f4f9fd"/><rect x="1096.3" y="232.3" width="11.399999999999999" height="7.6" fill="#f4f9fd"/><rect x="1097.8999999999999" y="233.8" width="3.4" height="6.0" fill="#8fc0ea"/></svg>
<div class="b sp" style="left:1124px;top:215px;height:24px"></div>
<svg class="b" style="left:1134px;top:218px;" width="30" height="22" viewBox="1134 218 30 22"><rect x="1135.5" y="220.6" width="18.5" height="17.8" rx="1.5" fill="#fbfcfd" stroke="#b9bfc8" stroke-width="1"/><rect x="1136" y="221.1" width="17.5" height="3.4" fill="#dfe3e8"/><path d="M1136 224.8 H1153.5" stroke="#c3c8d0" stroke-width="1"/><path d="M1136 229.4 H1153.5" stroke="#c3c8d0" stroke-width="1"/><path d="M1136 234 H1153.5" stroke="#c3c8d0" stroke-width="1"/><path d="M1141.6 224.8 V238" stroke="#c3c8d0" stroke-width="1"/><path d="M1147.8 224.8 V238" stroke="#c3c8d0" stroke-width="1"/><path d="M1146.5 228.6 C1148 224.2 1152 223.7 1156 224 V221 L1162.7 226.2 L1156 231.2 V228.2 C1152 227.8 1149 227.8 1146.5 228.6 Z" fill="#1aa779"/></svg>
<div class="T " style="left:1166.90px;top:174.1px;font-size:16px;color:#111;letter-spacing:-0.059px;"><i></i>Import Dataset</div>
<svg class="b" style="left:1295.7px;top:226.8px;" width="10" height="6" viewBox="1295.7 226.8 10 6"><path d="M1296.8 227.70000000000002 H1304.6000000000001 L1300.7 232.10000000000002 Z" fill="#151515"/></svg>
<div class="b sp" style="left:1317px;top:215px;height:24px"></div>
<svg class="b" style="left:1326px;top:218px;" width="22" height="22" viewBox="1326 218 22 22"><circle cx="1336.8" cy="228.8" r="9.3" fill="#e5e5e5"/><path d="M1336.8 219.5 A9.3 9.3 0 0 1 1336.8 238.1 Z" fill="#4a8478"/><circle cx="1336.2" cy="228.8" r="1.7" fill="#fff"/></svg>
<div class="T " style="left:1354.40px;top:175px;font-size:16px;color:#111;letter-spacing:0.071px;"><i></i>503 MiB</div>
<svg class="b" style="left:1428.3px;top:227.2px;" width="10" height="6" viewBox="1428.3 227.2 10 6"><path d="M1429.3999999999999 228.1 H1437.2 L1433.3 232.5 Z" fill="#151515"/></svg>
<div class="b sp" style="left:1449px;top:215px;height:24px"></div>
<svg class="b" style="left:1459px;top:214px;" width="28" height="28" viewBox="1459 214 28 28"><defs><linearGradient id="br1" x1="0" y1="0" x2="1" y2="1"><stop offset="0" stop-color="#f3dc93"/><stop offset="1" stop-color="#c9a14a"/></linearGradient></defs><ellipse cx="1474" cy="238.4" rx="9.5" ry="1.4" fill="#c9ccd0"/><path d="M1483 217.2 L1475.6 226.4" stroke="#d4706b" stroke-width="2.8" stroke-linecap="round"/><path d="M1472.4 223.8 L1478.6 229 C1477.6 233.5 1475.5 236.8 1472 238.6 C1468.6 237 1464.5 236.2 1461 234 C1466 231.6 1469.8 228.2 1472.4 223.8 Z" fill="url(#br1)" stroke="#c39a45" stroke-width=".6"/><path d="M1471 225.8 L1477.4 231.2 M1469.8 227.6 L1476.4 233" stroke="#a5692f" stroke-width="1.1"/></svg>
<svg class="b" style="left:1768px;top:221px;" width="20" height="18" viewBox="1768 221 20 18"><path d="M1769.3 222.8 H1786.2" stroke="#b3bbc0" stroke-width="1.4"/><path d="M1769.3 227.5 H1786.2" stroke="#b3bbc0" stroke-width="1.4"/><path d="M1769.3 232.1 H1786.2" stroke="#b3bbc0" stroke-width="1.4"/><path d="M1769.3 236.6 H1786.2" stroke="#b3bbc0" stroke-width="1.4"/></svg>
<div class="T " style="left:1794.70px;top:174.2px;font-size:16px;color:#111;letter-spacing:0.268px;"><i></i>List</div>
<svg class="b" style="left:1832.5px;top:226.8px;" width="10" height="6" viewBox="1832.5 226.8 10 6"><path d="M1833.6 227.70000000000002 H1841.4 L1837.5 232.10000000000002 Z" fill="#151515"/></svg>
<div class="b sp" style="left:1853px;top:215px;height:24px"></div>
<svg class="b" style="left:1863px;top:215px;" width="26" height="26" viewBox="1863 215 26 26"><path d="M1882.4 220.0 A10.8 10.8 0 1 0 1884.0 234.2 L1880.1 231.4 A6.0 6.0 0 1 1 1879.2 223.5 L1876.8 227.1 L1886.6 227.0 L1886.2 217.0 Z" fill="#dbe6f5" stroke="#b7c6dd" stroke-width="1" stroke-linejoin="round"/></svg>
<svg class="b" style="left:1892.4px;top:227px;" width="10" height="6" viewBox="1892.4 227 10 6"><path d="M1893.5 227.9 H1901.3000000000002 L1897.4 232.3 Z" fill="#151515"/></svg>
<div class="T " style="left:1054.40px;top:205.6px;font-size:16px;color:#111;letter-spacing:-0.900px;"><i></i>R</div>
<svg class="b" style="left:1074.5px;top:258.9px;" width="10" height="6" viewBox="1074.5 258.9 10 6"><path d="M1075.6 259.79999999999995 H1083.4 L1079.5 264.2 Z" fill="#151515"/></svg>
<div class="b sp" style="left:1095px;top:247px;height:24px"></div>
<svg class="b" style="left:1107px;top:250px;" width="27" height="23" viewBox="1107 250 27 23"><rect x="1113.6" y="251" width="12.6" height="12.6" rx="2" fill="#c06fcf"/><rect x="1118.4" y="258.4" width="13.6" height="13.4" rx="2" fill="#6c9be6"/><rect x="1108.7" y="255.6" width="13.8" height="13.4" rx="2" fill="#a8c27c"/></svg>
<div class="T " style="left:1139.60px;top:205.6px;font-size:16px;color:#111;letter-spacing:-0.113px;"><i></i>Global Environment</div>
<svg class="b" style="left:1305px;top:258.9px;" width="10" height="6" viewBox="1305 258.9 10 6"><path d="M1306.1 259.79999999999995 H1313.9 L1310 264.2 Z" fill="#151515"/></svg>
<div class="b" style="left:1713px;top:250px;width:182px;height:26px;border:1px solid #d3d8dc;border-radius:4px;background:#fff"></div>
<svg class="b" style="left:1721px;top:253px;" width="24" height="22" viewBox="1721 253 24 22"><circle cx="1730.2" cy="261.6" r="6" fill="none" stroke="#a9b1b6" stroke-width="2.6"/><path d="M1734.6 266.2 L1741 272" stroke="#a9b1b6" stroke-width="3.4" stroke-linecap="butt"/></svg>
<div class="b" style="left:1043px;top:280px;width:864px;height:30px;background:#f4f8f9;"></div>
<div class="b" style="left:1043px;top:310px;width:864px;height:1px;background:#d5d9dc;"></div>
<div class="T " style="left:1050.3px;top:241px;font-size:18px;font-family:'DejaVu Sans Mono','Liberation Mono',monospace;-webkit-text-stroke:0.3px;color:#111;letter-spacing:0.603px;-webkit-text-stroke:0.7px;"><i></i>Data</div>
<div class="b" style="left:1043px;top:340px;width:864px;height:1px;background:#d5d9dc;"></div>
<div class="b" style="left:1288px;top:311px;width:1px;height:29px;background:#d5d9dc;"></div>
<div class="b" style="left:1906px;top:311px;width:1px;height:29px;background:#d5d9dc;"></div>
<svg class="b" style="left:1049px;top:314px;" width="21" height="21" viewBox="1049 314 21 21"><defs><linearGradient id="ex1" x1="0" y1="0" x2="0" y2="1"><stop offset="0" stop-color="#9cc3ea"/><stop offset="1" stop-color="#5d95cf"/></linearGradient></defs><circle cx="1059.5" cy="324.3" r="8.9" fill="url(#ex1)" stroke="#8fb4dc" stroke-width=".8"/><path d="M1057 319.6 L1063.4 324.3 L1057 329 Z" fill="#fff"/></svg>
<div class="T " style="left:1074.6px;top:271px;font-size:18px;font-family:'DejaVu Sans Mono','Liberation Mono',monospace;-webkit-text-stroke:0.3px;color:#000;letter-spacing:0.603px;"><i></i>coqueluche</div>
<div class="T " style="left:1296.5px;top:271px;font-size:18px;font-family:'DejaVu Sans Mono','Liberation Mono',monospace;-webkit-text-stroke:0.3px;color:#000;letter-spacing:0.603px;"><i></i>161128 obs. of 12 variables</div>
<svg class="b" style="left:1857px;top:314px;" width="24" height="20" viewBox="1857 314 24 20"><path d="M1859.5 332.3 V318 Q1859.5 315.6 1862 315.6 H1877 Q1879.4 315.6 1879.4 318 V332.3 Z" fill="#fcfdff" stroke="#b9c1cc" stroke-width="1"/><path d="M1860 318.8 V318 Q1860 316.1 1862 316.1 H1877 Q1878.9 316.1 1878.9 318 V318.8 Z" fill="#c6e7f8"/><path d="M1860 319.2 H1879" stroke="#dde2ea" stroke-width="1"/><path d="M1860 323.6 H1879" stroke="#dde2ea" stroke-width="1"/><path d="M1860 328 H1879" stroke="#dde2ea" stroke-width="1"/><path d="M1863.6 319.2 V332" stroke="#dde2ea" stroke-width="1"/><path d="M1868.6 319.2 V332" stroke="#dde2ea" stroke-width="1"/><path d="M1874.3 319.2 V332" stroke="#dde2ea" stroke-width="1"/></svg>
<!-- files pane -->
<div class="b" style="left:1042px;top:457px;width:866px;height:613px;border:1px solid #d5d9dc;border-radius:5px 5px 0 0;background:#fff"></div>
<div class="b" style="left:1043px;top:458px;width:864px;height:33px;border-radius:4px 4px 0 0;background:#e8e9eb"></div>
<div class="b" style="left:1043px;top:491px;width:864px;height:1px;background:#d5d9dc;"></div>
<div class="b" style="left:1043px;top:458px;width:65px;height:34px;background:#f4f8f9;border-radius:4px 4px 0 0"></div>
<div class="b" style="left:1104px;top:457px;width:5px;height:35px;border-right:1px solid #d5d9dc;border-top:1px solid #d5d9dc;border-radius:0 5px 0 0"></div>
<div class="T " style="left:1055.30px;top:417.5px;font-size:16.4px;color:#0c0c0c;-webkit-text-stroke:0.72px;letter-spacing:0.868px;"><i></i>Files</div>
<div class="b" style="left:1109px;top:458px;width:70px;height:33px;background:#ecedef;border-right:1px solid #d9dbde;border-radius:0 5px 0 0"></div>
<div class="T " style="left:1122.30px;top:417.5px;font-size:16.4px;color:#0c0c0c;-webkit-text-stroke:0.72px;letter-spacing:0.702px;"><i></i>Plots</div>
<div class="b" style="left:1179px;top:458px;width:106px;height:33px;background:#ecedef;border-right:1px solid #d9dbde;border-radius:0 5px 0 0"></div>
<div class="T " style="left:1191.60px;top:417.5px;font-size:16.4px;color:#0c0c0c;-webkit-text-stroke:0.72px;letter-spacing:0.352px;"><i></i>Packages</div>
<div class="b" style="left:1285px;top:458px;width:66px;height:33px;background:#ecedef;border-right:1px solid #d9dbde;border-radius:0 5px 0 0"></div>
<div class="T " style="left:1297.80px;top:417.5px;font-size:16.4px;color:#0c0c0c;-webkit-text-stroke:0.72px;letter-spacing:0.646px;"><i></i>Help</div>
<div class="b" style="left:1351px;top:458px;width:85px;height:33px;background:#ecedef;border-right:1px solid #d9dbde;border-radius:0 5px 0 0"></div>
<div class="T " style="left:1365.00px;top:417.5px;font-size:16.4px;color:#0c0c0c;-webkit-text-stroke:0.72px;letter-spacing:0.244px;"><i></i>Viewer</div>
<div class="b" style="left:1436px;top:458px;width:135px;height:33px;background:#ecedef;border-right:1px solid #d9dbde;border-radius:0 5px 0 0"></div>
<div class="T " style="left:1449.40px;top:417.5px;font-size:16.4px;color:#0c0c0c;-webkit-text-stroke:0.72px;letter-spacing:0.486px;"><i></i>Presentation</div>
<svg class="b" style="left:1844px;top:467px;" width="51" height="21" viewBox="1844 467 51 21"><rect x="1845.7" y="478.2" width="19.6" height="7.6" rx="1.5" fill="#f6f7f8" stroke="#8b9499" stroke-width="1.4"/><path d="M1845 482 V479.4 Q1845 477.5 1847 477.5 H1864 Q1866 477.5 1866 479.4 V482 Z" fill="#8b9499"/><rect x="1872.7" y="469.2" width="19.6" height="16.6" rx="1.5" fill="none" stroke="#8b9499" stroke-width="1.4"/><path d="M1872 473 V470.4 Q1872 468.5 1874 468.5 H1891 Q1893 468.5 1893 470.4 V473 Z" fill="#8b9499"/></svg>
<div class="b" style="left:1043px;top:492px;width:864px;height:31px;background:#f4f8f9;"></div>
<div class="b" style="left:1043px;top:523px;width:864px;height:1px;background:#d5d9dc;"></div>
<div class="b" style="left:1043px;top:524px;width:864px;height:31px;background:#f4f8f9;"></div>
<div class="b" style="left:1043px;top:555px;width:864px;height:1px;background:#d5d9dc;"></div>
<div class="b" style="left:1043px;top:556px;width:864px;height:27px;background:#f4f8f9;"></div>
<div class="b" style="left:1043px;top:583px;width:864px;height:1px;background:#d5d9dc;"></div>
<svg class="b" style="left:1050px;top:497px;" width="32" height="24" viewBox="1050 497 32 24"><defs><linearGradient id="nf1" x1="0" y1="0" x2="0" y2="1"><stop offset="0" stop-color="#fdf3bf"/><stop offset="1" stop-color="#e6bd50"/></linearGradient></defs><path d="M1057 518.4 V503.5 Q1057 501.5 1059 501.5 H1065.5 L1068 499.6 H1076.5 Q1078.6 499.6 1078.6 501.6 V504 H1079.6 V518.4 Z" fill="#eceae2" stroke="#c9a648" stroke-width="1"/><path d="M1056.6 518.6 V505.2 H1079.8 V518.6 Z" fill="url(#nf1)" stroke="#cfa43a" stroke-width="1" stroke-linejoin="round"/><circle cx="1059.6" cy="506.6" r="7.6" fill="#0f9d68"/><path d="M1059.6 502 V511.2 M1055 506.6 H1064.2" stroke="#fff" stroke-width="2.7"/></svg>
<div class="T " style="left:1084.80px;top:453.7px;font-size:16px;color:#111;letter-spacing:-0.072px;"><i></i>New Folder</div>
<div class="b sp" style="left:1189px;top:496px;height:24px"></div>
<svg class="b" style="left:1198px;top:498px;" width="30" height="26" viewBox="1198 498 30 26"><rect x="1207.6" y="501.4" width="16.8" height="18.2" fill="#fff" stroke="#d0d6de" stroke-width="1"/><circle cx="1207" cy="506.7" r="7.6" fill="#0f9d68"/><path d="M1207 502.1 V511.3 M1202.4 506.7 H1211.6" stroke="#fff" stroke-width="2.7"/></svg>
<div class="T " style="left:1231.00px;top:453.7px;font-size:16px;color:#111;letter-spacing:0.055px;"><i></i>New File</div>
<svg class="b" style="left:1307px;top:507.9px;" width="10" height="6" viewBox="1307 507.9 10 6"><path d="M1308.1 508.79999999999995 H1315.9 L1312 513.1999999999999 Z" fill="#151515"/></svg>
<div class="b sp" style="left:1328px;top:496px;height:24px"></div>
<svg class="b" style="left:1337px;top:498px;" width="30" height="26" viewBox="1337 498 30 26"><rect x="1346.8999999999999" y="501.4" width="16.8" height="18.2" fill="#fff" stroke="#d0d6de" stroke-width="1"/><path d="M1363.9999999999998 502.9 V519.9 H1348.3999999999999" fill="none" stroke="#8f959d" stroke-width="1.1" opacity=".8"/><circle cx="1346.3" cy="506.7" r="7.6" fill="#c9a227"/><path d="M1346.3 502 L1350.6 506.6 H1348.1 V511 H1344.5 V506.6 H1342 Z" fill="#fff"/></svg>
<div class="T " style="left:1371.20px;top:453.7px;font-size:16px;color:#111;letter-spacing:0.179px;"><i></i>Upload</div>
<div class="b sp" style="left:1443px;top:496px;height:24px"></div>
<svg class="b" style="left:1451px;top:498px;" width="30" height="26" viewBox="1451 498 30 26"><rect x="1460.8999999999999" y="501.4" width="16.8" height="18.2" fill="#fff" stroke="#d0d6de" stroke-width="1"/><circle cx="1460.3" cy="506.7" r="7.6" fill="#b41d1d"/><path d="M1457 503.4 L1463.6 510 M1463.6 503.4 L1457 510" stroke="#fff" stroke-width="2.6" stroke-linecap="round"/></svg>
<div class="T " style="left:1486.20px;top:453.7px;font-size:16px;color:#111;letter-spacing:-0.245px;"><i></i>Delete</div>
<svg class="b" style="left:1553px;top:499px;" width="28" height="22" viewBox="1553 499 28 22"><rect x="1555.5" y="500.8" width="13.5" height="14.5" fill="#fff" stroke="#c6ccd4" stroke-width="1"/><rect x="1564.5" y="504.6" width="13.8" height="14.6" fill="#fff" stroke="#b9c0c9" stroke-width="1"/><path d="M1561.4 510.2 H1567 V506.8 L1573.4 512 L1567 517.2 V513.8 H1561.4 Z" fill="#1d9fe8"/></svg>
<div class="T " style="left:1584.80px;top:453.7px;font-size:16px;color:#111;letter-spacing:-0.215px;"><i></i>Rename</div>
<div class="b sp" style="left:1664px;top:496px;height:24px"></div>
<svg class="b" style="left:1676px;top:496px;" width="27" height="27" viewBox="1676 496 27 27"><defs><radialGradient id="gg1" cx=".4" cy=".3" r=".8"><stop offset="0" stop-color="#7fd2f0"/><stop offset="1" stop-color="#2d8fc4"/></radialGradient></defs><path d="M1700.5 506.6 L1700.5 511.4 L1697.1 512.2 L1697.1 512.2 L1699.0 515.2 L1695.6 518.6 L1692.6 516.7 L1692.6 516.7 L1691.8 520.1 L1687.0 520.1 L1686.2 516.7 L1686.2 516.7 L1683.2 518.6 L1679.8 515.2 L1681.7 512.2 L1681.7 512.2 L1678.3 511.4 L1678.3 506.6 L1681.7 505.8 L1681.7 505.8 L1679.8 502.8 L1683.2 499.4 L1686.2 501.3 L1686.2 501.3 L1687.0 497.9 L1691.8 497.9 L1692.6 501.3 L1692.6 501.3 L1695.6 499.4 L1699.0 502.8 L1697.1 505.8 L1697.1 505.8 Z" fill="url(#gg1)" stroke="#2a86b8" stroke-width=".8" stroke-linejoin="round"/><circle cx="1689.4" cy="509" r="3.5" fill="#f4f8f9" stroke="#2a86b8" stroke-width=".8"/></svg>
<div class="T " style="left:1707.00px;top:453.7px;font-size:16px;color:#111;letter-spacing:0.393px;"><i></i>More</div>
<svg class="b" style="left:1757px;top:507.9px;" width="10" height="6" viewBox="1757 507.9 10 6"><path d="M1758.1 508.79999999999995 H1765.9 L1762 513.1999999999999 Z" fill="#151515"/></svg>
<svg class="b" style="left:1875px;top:495px;" width="27" height="27" viewBox="1875 495 27 27"><path d="M1895.0 500.3 A10.600000000000001 10.600000000000001 0 1 0 1896.6 514.3 L1892.7 511.5 A5.800000000000001 5.800000000000001 0 1 1 1891.8 503.9 L1889.4 507.5 L1899.1 507.2 L1898.7 497.4 Z" fill="#e9edf3" stroke="#c2c9d4" stroke-width="1" stroke-linejoin="round"/></svg>
<div class="b" style="left:1049px;top:528.2px;width:19px;height:19px;border:1.3px solid #9e9e9e;border-radius:4px;background:#fff"></div>
<svg class="b" style="left:1076px;top:527px;" width="34" height="24" viewBox="1076 527 34 24"><path d="M1084.6 549.6 C1080.4 549.6 1077.6 547 1077.6 543.6 C1077.6 540.4 1079.8 538.2 1082.8 537.8 C1083 532.8 1086.8 529.3 1091.6 529.3 C1095.4 529.3 1098.4 531.4 1099.8 534.6 C1100.4 534.4 1101 534.4 1101.6 534.4 C1105.4 534.4 1108.2 537.6 1108.2 541.8 C1108.2 546.2 1105.2 549.6 1101.2 549.6 Z" fill="#1594cb"/></svg>
<div class="T " style="left:1117.00px;top:482.6px;font-size:16px;color:#2344c4;letter-spacing:0.238px;"><i></i>Cloud</div>
<svg class="b" style="left:1170px;top:532px;" width="12" height="16" viewBox="1170 532 12 16"><path d="M1172.4 534.4 L1178.8 540.3 L1172.4 546.2" fill="none" stroke="#c9cbcd" stroke-width="1.5"/></svg>
<div class="T " style="left:1188.80px;top:482.6px;font-size:16px;color:#2344c4;letter-spacing:0.124px;"><i></i>project</div>
<svg class="b" style="left:1844px;top:526.6px;" width="24" height="24" viewBox="1844 526.6 24 24"><path d="M1856 528.0 L1866.6 532.2 V545.0 L1856 549.4 L1845.4 545.0 V532.2 Z" fill="#c3e6f3" stroke="#8ecfe6" stroke-width=".9" stroke-linejoin="round"/><path d="M1845.4 532.2 L1856 536.2 L1866.6 532.2 M1856 536.2 V549.4" fill="none" stroke="#6fc0dc" stroke-width=".8"/><path d="M1845.4 545.0 L1856 541.2 L1866.6 545.0 M1856 528.0 V541.2" fill="none" stroke="#8fd3e6" stroke-width=".7"/></svg>
<div class="T " style="left:1851.0px;top:482.3px;font-size:14.5px;font-family:'Liberation Serif',serif;color:#3b7cc2;"><i></i>R</div>
<div class="b" style="left:1877px;top:525px;width:1px;height:30px;background:#d5d9dc;"></div>
<div class="T " style="left:1886.6px;top:486px;font-size:16px;color:#222;"><i></i>...</div>
<div class="b" style="left:1087px;top:556px;width:1px;height:27px;background:#d5d9dc;"></div>
<div class="b" style="left:1126px;top:556px;width:1px;height:27px;background:#d5d9dc;"></div>
<div class="b" style="left:1546px;top:556px;width:1px;height:27px;background:#d5d9dc;"></div>
<div class="b" style="left:1666px;top:556px;width:1px;height:27px;background:#d5d9dc;"></div>
<svg class="b" style="left:1139px;top:563px;" width="16" height="12" viewBox="1139 563 16 12"><path d="M1140.4 573.8 L1147 564.8 L1153.6 573.8 Z" fill="#7d848f"/></svg>
<div class="T " style="left:1161.20px;top:514.7px;font-size:16px;color:#3a3a3a;letter-spacing:-0.186px;"><i></i>Name</div>
<div class="T " style="left:1555.50px;top:514.7px;font-size:16px;color:#3a3a3a;letter-spacing:0.100px;"><i></i>Size</div>
<div class="T " style="left:1675.60px;top:514.7px;font-size:16px;color:#3a3a3a;letter-spacing:0.383px;"><i></i>Modified</div>
<svg class="b" style="left:1097px;top:588px;" width="23" height="22" viewBox="1097 588 23 22"><defs><linearGradient id="up1" x1="0" y1="0" x2="0" y2="1"><stop offset="0" stop-color="#4bd88a"/><stop offset="1" stop-color="#1fa45a"/></linearGradient></defs><path d="M1106 589.6 L1113.6 597.8 H1109 V604.4 H1118 V608.6 H1103.2 V597.8 H1098.4 Z" fill="url(#up1)" stroke="#23a862" stroke-width=".8" stroke-linejoin="round"/></svg>
<div class="T " style="left:1132.3px;top:547.5px;font-size:16px;color:#0d0da6;"><i></i>..</div>
<div class="b" style="left:1059.2px;top:625.4px;width:19.5px;height:18.4px;border:1.3px solid #b3b3b3;border-radius:4px;background:#fff"></div>
<svg class="b" style="left:1094px;top:622px;" width="28" height="26" viewBox="1094 622 28 26"><path d="M1100.1 623.7 H1113.1999999999998 L1119.3999999999999 629.8000000000001 V645.5 H1100.1 Z" fill="#fff" stroke="#b9bdc2" stroke-width="1"/><path d="M1113.1999999999998 623.7 V629.8000000000001 H1119.3999999999999" fill="#f3f4f5" stroke="#b9bdc2" stroke-width="1"/><circle cx="1103.4" cy="633.5" r="6.3" fill="#f7f8fa" stroke="#c2c6cc" stroke-width="1"/><path d="M1103.5 629.5 V633.6 H1105.8" fill="none" stroke="#222" stroke-width="1.1"/></svg>
<div class="T " style="left:1131.40px;top:582.8px;font-size:17.4px;color:#0d0da6;letter-spacing:-0.092px;"><i></i>.Rhistory</div>
<div class="T " style="left:1550.80px;top:582.8px;font-size:17.4px;color:#111;letter-spacing:-0.196px;"><i></i>0 B</div>
<div class="T " style="left:1671.80px;top:582.8px;font-size:17.4px;color:#111;letter-spacing:0.206px;"><i></i>Jul 29, 2025, 4:28 PM</div>
<div class="b" style="left:1059.2px;top:660.4px;width:19.5px;height:18.4px;border:1.3px solid #b3b3b3;border-radius:4px;background:#fff"></div>
<svg class="b" style="left:1097px;top:658.5px;" width="24" height="24" viewBox="1097 658.5 24 24"><path d="M1109 659.9 L1119.6 664.1 V676.9 L1109 681.3 L1098.4 676.9 V664.1 Z" fill="#c3e6f3" stroke="#8ecfe6" stroke-width=".9" stroke-linejoin="round"/><path d="M1098.4 664.1 L1109 668.1 L1119.6 664.1 M1109 668.1 V681.3" fill="none" stroke="#6fc0dc" stroke-width=".8"/><path d="M1098.4 676.9 L1109 673.1 L1119.6 676.9 M1109 659.9 V673.1" fill="none" stroke="#8fd3e6" stroke-width=".7"/></svg>
<div class="T " style="left:1104.0px;top:614.2px;font-size:14.5px;font-family:'Liberation Serif',serif;color:#3b7cc2;"><i></i>R</div>
<div class="T " style="left:1131.40px;top:617.8px;font-size:17.4px;color:#0d0da6;letter-spacing:0.182px;"><i></i>project.Rproj</div>
<div class="T " style="left:1550.80px;top:617.8px;font-size:17.4px;color:#111;letter-spacing:0.045px;"><i></i>205 B</div>
<div class="T " style="left:1671.80px;top:617.8px;font-size:17.4px;color:#111;letter-spacing:0.206px;"><i></i>Jul 29, 2025, 4:29 PM</div>
<div class="b" style="left:1059.2px;top:695.4px;width:19.5px;height:18.4px;border:1.3px solid #b3b3b3;border-radius:4px;background:#fff"></div>
<svg class="b" style="left:1094px;top:692px;" width="28" height="26" viewBox="1094 692 28 26"><path d="M1100.1 693.7 H1113.1999999999998 L1119.3999999999999 699.8000000000001 V715.5 H1100.1 Z" fill="#fff" stroke="#b9bdc2" stroke-width="1"/><path d="M1113.1999999999998 693.7 V699.8000000000001 H1119.3999999999999" fill="#f3f4f5" stroke="#b9bdc2" stroke-width="1"/><path d="M1097.2 698.6 V710.2 C1097.2 712.6 1110 712.6 1110 710.2 V698.6 Z" fill="#169f83"/><path d="M1104.6 698.6 H1110 V710.2 C1110 711.4000000000001 1107.6 712.0 1104.6 712.0 Z" fill="#0c7a63"/><ellipse cx="1103.6" cy="698.6" rx="6.4" ry="2.2" fill="#5fd2b6"/></svg>
<div class="T " style="left:1099.6px;top:649.4px;font-size:10.5px;font-family:'Liberation Sans','DejaVu Sans',sans-serif;-webkit-text-stroke:0;font-weight:bold;color:#fff;"><i></i>R</div>
<div class="T " style="left:1132.40px;top:652.8px;font-size:17.4px;color:#0d0da6;letter-spacing:-0.245px;"><i></i>coqueluche.RData</div>
<div class="T " style="left:1550.80px;top:652.8px;font-size:17.4px;color:#111;letter-spacing:0.142px;"><i></i>1.4 MB</div>
<div class="T " style="left:1671.80px;top:652.8px;font-size:17.4px;color:#111;letter-spacing:0.206px;"><i></i>Jul 29, 2025, 4:34 PM</div>
<div class="b" style="left:1059.2px;top:730.4px;width:19.5px;height:18.4px;border:1.3px solid #b3b3b3;border-radius:4px;background:#fff"></div>
<svg class="b" style="left:1094px;top:727px;" width="28" height="26" viewBox="1094 727 28 26"><path d="M1100.1 728.7 H1113.1999999999998 L1119.3999999999999 734.8000000000001 V750.5 H1100.1 Z" fill="#fff" stroke="#b9bdc2" stroke-width="1"/><path d="M1113.1999999999998 728.7 V734.8000000000001 H1119.3999999999999" fill="#f3f4f5" stroke="#b9bdc2" stroke-width="1"/><circle cx="1103.4" cy="737.8000000000001" r="6.4" fill="#4a73aa"/></svg>
<div class="T " style="left:1099.9px;top:681.4px;font-size:9.5px;font-family:'Liberation Sans','DejaVu Sans',sans-serif;-webkit-text-stroke:0;font-weight:bold;color:#fff;"><i></i>R</div>
<div class="T " style="left:1131.40px;top:687.8px;font-size:17.4px;color:#0d0da6;letter-spacing:0.015px;"><i></i>meu primeiro script.R</div>
<div class="T " style="left:1550.80px;top:687.8px;font-size:17.4px;color:#111;letter-spacing:0.045px;"><i></i>160 B</div>
<div class="T " style="left:1671.80px;top:687.8px;font-size:17.4px;color:#111;letter-spacing:0.206px;"><i></i>Jul 29, 2025, 4:42 PM</div>
</body>
</html>
